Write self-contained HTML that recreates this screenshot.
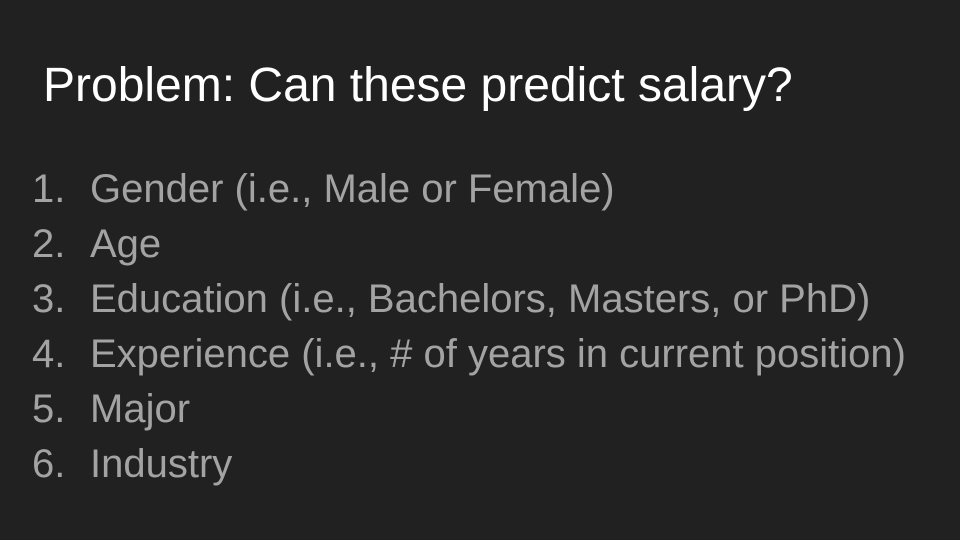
<!DOCTYPE html>
<html><head><style>
html,body{margin:0;padding:0;}
body{width:960px;height:540px;background:#212121;position:relative;overflow:hidden;font-family:"Liberation Sans",sans-serif;}
.t{position:absolute;left:43px;top:58px;font-size:48px;color:#fff;white-space:nowrap;}
.l{position:absolute;left:32px;font-size:40px;color:#a3a3a3;white-space:nowrap;line-height:1;}
.l span{display:inline-block;width:58px;}
</style></head><body>
<div class="t">Problem: Can these predict salary?</div>
<div class="l" style="top:169px"><span>1.</span>Gender (i.e., Male or Female)</div>
<div class="l" style="top:224px"><span>2.</span>Age</div>
<div class="l" style="top:279px"><span>3.</span>Education (i.e., Bachelors, Masters, or PhD)</div>
<div class="l" style="top:334px"><span>4.</span>Experience (i.e., # of years in current position)</div>
<div class="l" style="top:389px"><span>5.</span>Major</div>
<div class="l" style="top:444px"><span>6.</span>Industry</div>
</body></html>
